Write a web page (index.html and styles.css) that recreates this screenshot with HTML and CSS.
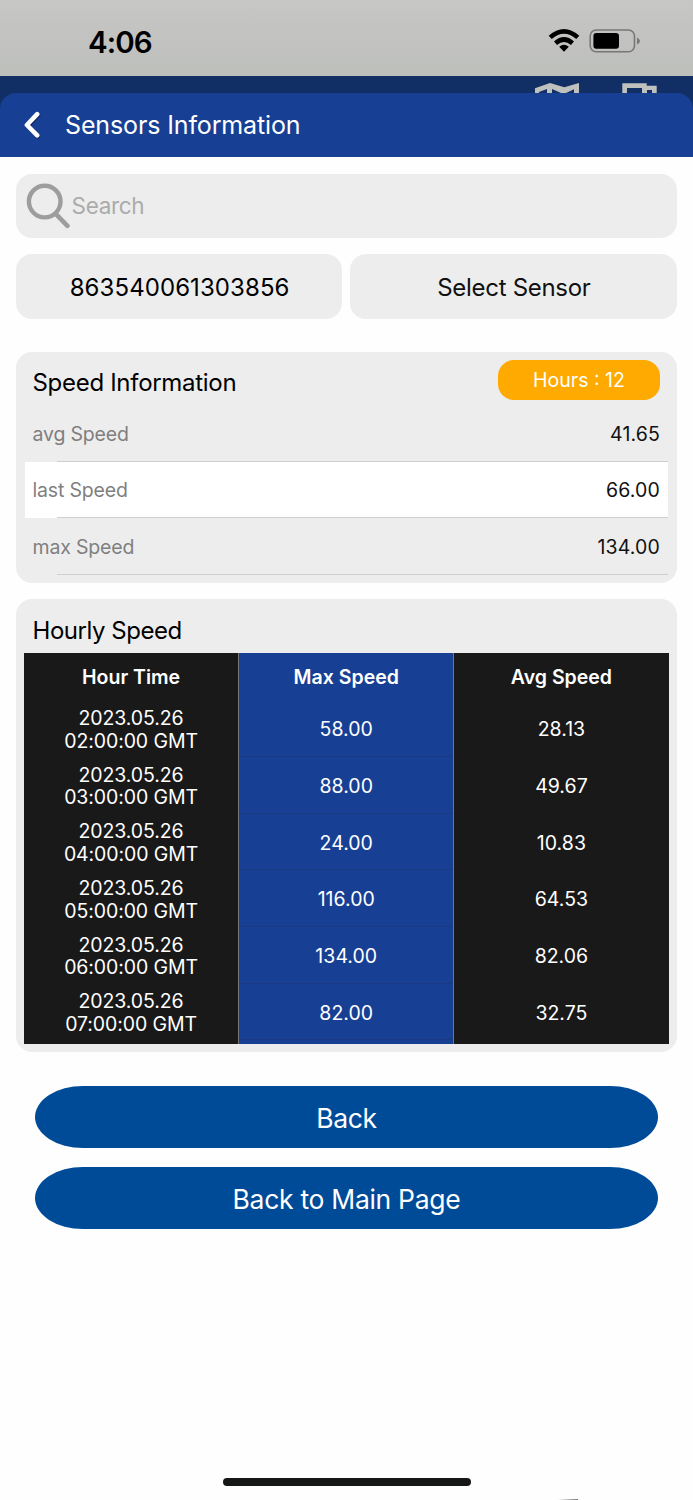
FILE: index.html
```html
<!DOCTYPE html>
<html lang="en">
<head>
<meta charset="utf-8">
<title>Sensors Information</title>
<link rel="stylesheet" href="styles.css">
</head>
<body>
<div class="screen">
  <header class="status">
    <span class="clock">4:06</span>
    <svg class="status-icons" width="94" height="28" viewBox="0 0 94 28">
      <g fill="none" stroke="#000" stroke-width="4.6">
        <path d="M3.2 10.4Q17 -1.8 30.8 10.4"/>
        <path d="M8.5 16.2Q17 8.8 25.5 16.2"/>
      </g>
      <path d="M12.2 19.8Q17 15.8 21.8 19.8L17 24.8Z"/>
      <rect x="43.2" y="3" width="44.3" height="21.8" rx="6" fill="none" stroke="#777876" stroke-width="1.6"/>
      <rect x="46.4" y="6" width="25.6" height="15.8" rx="3"/>
      <path d="M90 10.5Q93 12 93 14Q93 16 90 17.5Z" fill="#777876"/>
    </svg>
  </header>
  <div class="backdrop">
    <svg class="peek" width="124" height="11" viewBox="0 0 124 11" fill="#bfc1be">
      <path d="M1 6.3L16 1L30.3 5.3L45 1V11H40V7.3L32 11H27L18 7V11H13V7L5 10V11H1Z"/>
      <path d="M88.3 1.3H112.7V3.7H122.7V11H118V8H113V11H108V6H93V11H88.3Z"/>
    </svg>
  </div>
  <div class="titlebar">
    <svg class="chevron" width="18" height="28" viewBox="0 0 18 28" fill="none" stroke-width="4.6" stroke-linecap="round" stroke-linejoin="round">
      <path d="M15 4L4.8 14.8L15 25.2" stroke="#0c2358"/>
      <path d="M14.2 3.2L3.9 14L14.2 24.4" stroke="#fff"/>
    </svg>
    <h1>Sensors Information</h1>
  </div>
  <main>
    <div class="search">
      <svg width="46" height="46" viewBox="0 0 46 46" fill="none" stroke="#9d9d9d">
        <circle cx="19.7" cy="18.6" r="15.8" stroke-width="4.4"/>
        <path d="M31 31.2L42.4 42.8" stroke-width="4.6" stroke-linecap="round"/>
      </svg>
      <span class="placeholder">Search</span>
    </div>
    <div class="selectors">
      <div class="box imei">863540061303856</div>
      <div class="box">Select Sensor</div>
    </div>
    <section class="card speed">
      <div class="card-head"><h2>Speed Information</h2><div class="hours">Hours : 12</div></div>
      <div class="row"><span class="label">avg Speed</span><span class="value">41.65</span></div>
      <div class="row white"><span class="label">last Speed</span><span class="value">66.00</span></div>
      <div class="row"><span class="label">max Speed</span><span class="value">134.00</span></div>
    </section>
    <section class="card hourly">
      <h2>Hourly Speed</h2>
      <div class="table">
        <div class="col">
          <div class="th">Hour Time</div>
          <div class="td first">2023.05.26<br>02:00:00 GMT</div>
          <div class="td first">2023.05.26<br>03:00:00 GMT</div>
          <div class="td first">2023.05.26<br>04:00:00 GMT</div>
          <div class="td first">2023.05.26<br>05:00:00 GMT</div>
          <div class="td first">2023.05.26<br>06:00:00 GMT</div>
          <div class="td first">2023.05.26<br>07:00:00 GMT</div>
        </div>
        <div class="col blue">
          <div class="th">Max Speed</div>
          <div class="td">58.00</div><div class="td">88.00</div><div class="td">24.00</div>
          <div class="td">116.00</div><div class="td">134.00</div><div class="td">82.00</div>
        </div>
        <div class="col">
          <div class="th">Avg Speed</div>
          <div class="td">28.13</div><div class="td">49.67</div><div class="td">10.83</div>
          <div class="td">64.53</div><div class="td">82.06</div><div class="td">32.75</div>
        </div>
      </div>
    </section>
    <div class="actions">
      <div class="pill">Back</div>
      <div class="pill">Back to Main Page</div>
    </div>
  </main>
  <footer><div class="home"></div><div class="edge"></div></footer>
</div>
</body>
</html>
```
FILE: styles.css
```css
* { box-sizing: border-box; }
body { margin: 0; background: #fefefe; color: #000; font-family: Inter, "Liberation Sans", sans-serif; font-size: 19.5px; }
h1, h2 { margin: 0; font-weight: 400; }
.screen { width: 693px; height: 1500px; display: flex; flex-direction: column; overflow: hidden; }
.status { height: 76px; flex: none; display: flex; justify-content: space-between; align-items: flex-start; padding: 27px 52px 0 88px; background: linear-gradient(#c7c7c6, #bdbfbb); }
.clock { font-size: 29.5px; line-height: 30px; font-weight: 600; letter-spacing: -0.9px; }
.backdrop { height: 33px; flex: none; background: #112f64; display: flex; justify-content: flex-end; padding: 6px 35px 0 0; }
.titlebar { height: 64px; flex: none; margin-top: -16px; border-radius: 16px 16px 0 0; background: #174094; color: #fff; display: flex; align-items: center; padding-left: 23px; z-index: 1; }
.titlebar h1 { font-size: 25px; margin-left: 24px; letter-spacing: -0.13px; }
main { padding: 17px 16.5px 0 16px; }
.search, .box, .card { background: #ededed; border-radius: 16px; }
.search { height: 64px; display: flex; align-items: center; padding-left: 9px; color: #ababab; font-size: 22.5px; letter-spacing: -0.3px; }
.placeholder { padding-bottom: 1px; margin-left: 0.5px; }
.selectors { display: grid; grid-template-columns: 1fr 1fr; gap: 8px; margin-top: 16px; }
.box { height: 65px; padding: 1px 0 0 1px; display: flex; align-items: center; justify-content: center; font-size: 24px; letter-spacing: -0.3px; color: #111; }
.imei { color: #000; letter-spacing: 0.08px; }
.card { padding: 0 8.5px; }
.card h2 { font-size: 24px; letter-spacing: -0.3px; }
.speed { height: 231px; margin-top: 32.5px; }
.card-head { height: 53.5px; display: flex; justify-content: space-between; padding: 8px 8px 0; }
.card-head h2 { line-height: 46px; }
.hours { width: 162px; height: 40.5px; border-radius: 16px; background: #ffaa00; color: #fff; display: flex; align-items: center; justify-content: center; }
.row { height: 56.6px; display: flex; align-items: center; justify-content: space-between; padding: 1px 8px 0; background: linear-gradient(#cfcfcf, #cfcfcf) 32px 100% / 100% 1px no-repeat; color: #111; }
.row.white { background-color: #fff; }
.label { color: #7f7f7f; letter-spacing: -0.17px; }
.value { letter-spacing: 0.15px; }
.hourly { height: 453px; margin-top: 16.5px; }
.hourly h2 { height: 53.5px; line-height: 63px; padding-left: 8px; letter-spacing: -0.45px; }
.table { height: 391px; margin: 0 -0.5px; display: grid; grid-template-columns: 1fr 1fr 1fr; gap: 1px; background: #777; }
.col { background: #191919; color: #fff; text-align: center; }
.blue { background: #174094; }
.th { height: 48px; line-height: 49px; font-weight: 600; }
.td { height: 56.65px; line-height: 22.7px; padding-top: 2px; letter-spacing: 0.02px; display: flex; align-items: center; justify-content: center; background: linear-gradient(#2020202a, #2020202a) 0 100% / 100% 1px no-repeat; }
.first { background-position: 32px 100%; letter-spacing: -0.1px; }
.actions { display: flex; flex-direction: column; gap: 19px; padding: 34px 18.5px 0 19px; }
.pill { height: 62px; padding-top: 1px; border-radius: 48px / 31px; background: #004b98; color: #fff; font-size: 26.5px; letter-spacing: -0.3px; display: flex; align-items: center; justify-content: center; }
footer { margin-top: auto; height: 22px; flex: none; position: relative; display: flex; justify-content: center; }
.home { width: 248px; height: 8px; border-radius: 4px; background: #151716; }
.edge { position: absolute; right: 115px; bottom: 0; width: 20px; height: 1px; background: linear-gradient(90deg, #fefefe, #777); }
```
